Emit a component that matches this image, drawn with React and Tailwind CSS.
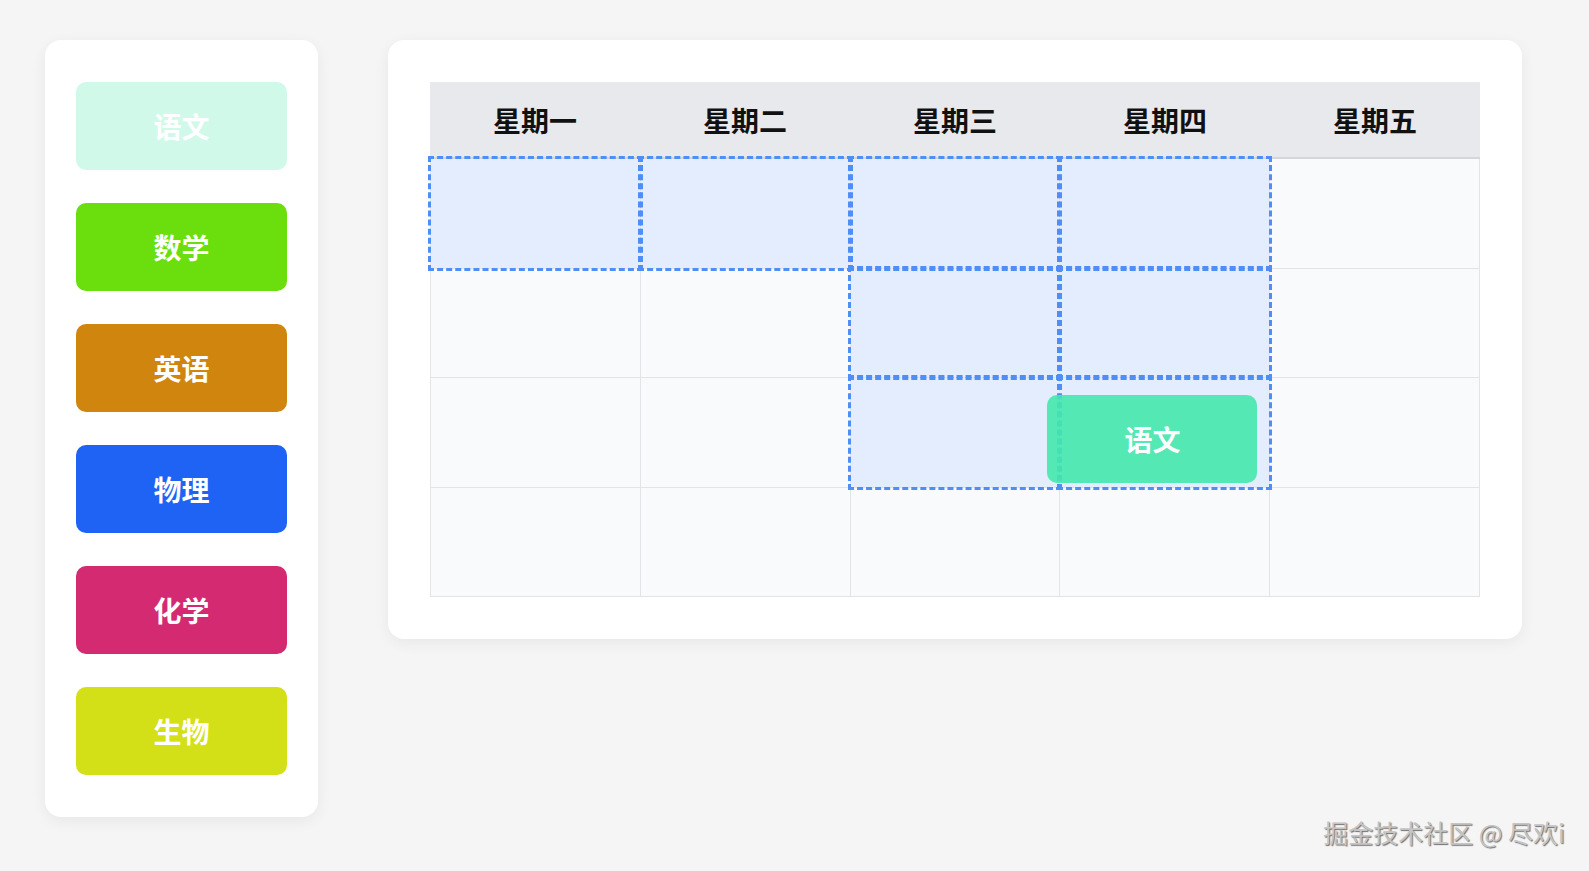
import React from 'react';

const subjects = [
  { name: '语文', color: 'bg-[#d1f9ea]' },
  { name: '数学', color: 'bg-[#6bde0e]' },
  { name: '英语', color: 'bg-[#d0860e]' },
  { name: '物理', color: 'bg-[#1f63f5]' },
  { name: '化学', color: 'bg-[#d32a72]' },
  { name: '生物', color: 'bg-[#d4e017]' },
];

const days = ['星期一', '星期二', '星期三', '星期四', '星期五'];

// cells currently under the drop preview, as "row-col"
const highlighted = new Set(['0-0', '0-1', '0-2', '0-3', '1-2', '1-3', '2-2', '2-3']);

function App() {
  return (
    <div className="relative min-h-screen bg-[#f5f5f5] flex items-start gap-[70px] pl-[45px] pt-[40px] font-['Noto_Sans_CJK_SC',sans-serif]">
      <div className="w-[273px] bg-white rounded-2xl shadow-[0_4px_16px_rgba(0,0,0,0.06)] px-[31px] py-[42px] flex flex-col gap-[33px]">
        {subjects.map((s) => (
          <div
            key={s.name}
            className={`${s.color} h-[88px] rounded-[10px] flex items-center justify-center text-white text-[28px] font-bold`}
          >
            {s.name}
          </div>
        ))}
      </div>

      <div className="w-[1134px] bg-white rounded-2xl shadow-[0_4px_16px_rgba(0,0,0,0.06)] p-[42px]">
        <div className="grid grid-cols-5 h-[77px] bg-[#e8e9ec] border-b-2 border-[#d4d6da]">
          {days.map((d) => (
            <div key={d} className="flex items-center justify-center text-[28px] font-bold text-[#111]">
              {d}
            </div>
          ))}
        </div>
        <div className="grid grid-cols-5 border-l border-[#e2e4e8]">
          {[0, 1, 2, 3].map((r) =>
            [0, 1, 2, 3, 4].map((c) => {
              const on = highlighted.has(`${r}-${c}`);
              return (
                <div
                  key={`${r}-${c}`}
                  className={`relative h-[109.5px] border-r border-b border-[#e2e4e8] ${on ? 'bg-[#e3edfd]' : 'bg-[#f9fafb]'}`}
                >
                  {on && (
                    <div className="absolute -inset-[3px] border-[3px] border-dashed border-[#4f8ef7] z-10 pointer-events-none" />
                  )}
                  {r === 2 && c === 3 && (
                    <div className="absolute left-[-13px] top-[17px] z-20 w-[210px] h-[88px] rounded-[10px] bg-[#45e8ad] opacity-90 flex items-center justify-center text-white text-[28px] font-bold">
                      语文
                    </div>
                  )}
                </div>
              );
            })
          )}
        </div>
      </div>

      <div className="absolute right-[24px] bottom-[20px] text-[25px] text-[#c4c4c4] [text-shadow:1px_1px_1px_rgba(0,0,0,0.55)]">
        掘金技术社区 @ 尽欢i
      </div>
    </div>
  );
}

export default App;
